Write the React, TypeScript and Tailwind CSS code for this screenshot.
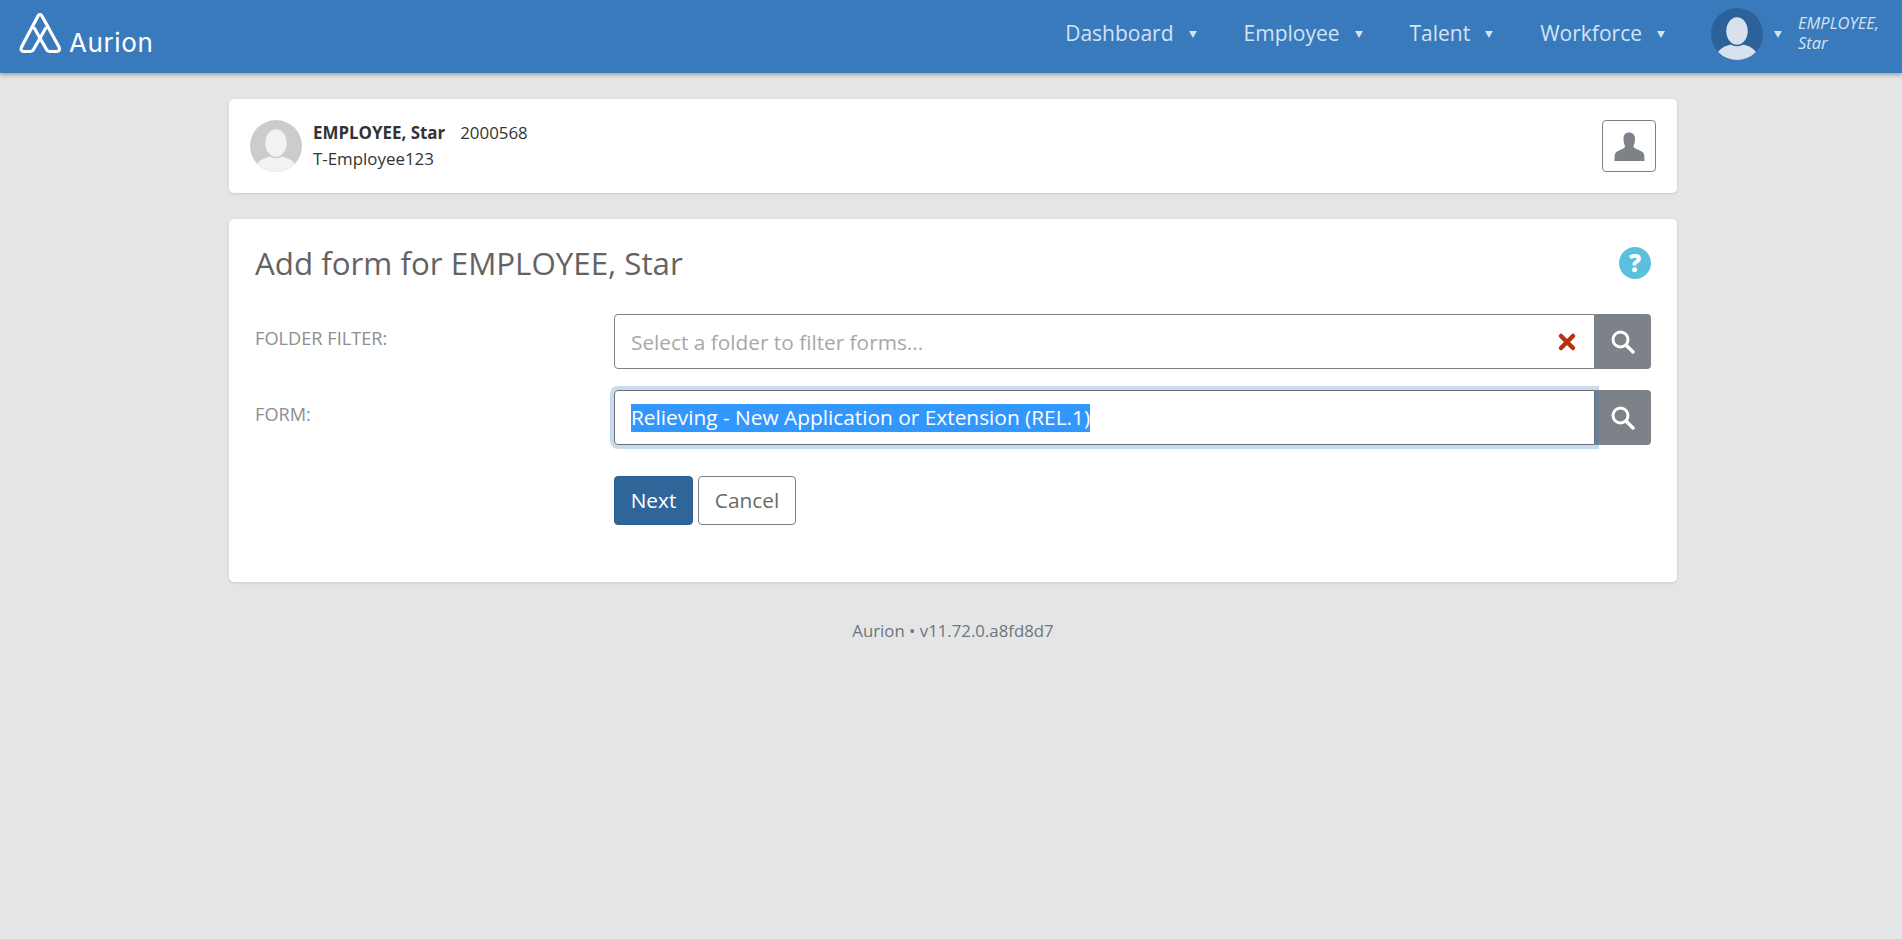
import { X } from "lucide-react";

const font = { fontFamily: '"Open Sans", sans-serif' };

const Logo = () => (
  <div className="flex items-end">
    <svg width="44" height="44" viewBox="0 0 44 44" fill="none" stroke="white" strokeWidth="3.2" strokeLinejoin="round" strokeLinecap="round">
      <path d="M21 2.5 Q22 2.5 23 4 L40 35 Q41.5 39 38 39.5 L30.5 39.5 Q28.5 39.5 27.5 37.5 L15.5 16.5" />
      <path d="M21 2.5 Q20 2.5 19 4 L2.5 35 Q1 39 4.5 39.5 L11.5 39.5 Q13.5 39.5 14.5 37.5 L26.5 16.5" />
    </svg>
    <span className="ml-[6px] -mb-[2px] text-[26px] leading-[30px] font-normal tracking-[0.6px] text-white" style={{ fontFamily: "Inter, sans-serif" }}>
      Aurion
    </span>
  </div>
);

const Caret = () => (
  <svg width="8" height="7" viewBox="0 0 8 7" fill="#d3e3f3">
    <path d="M0 0 H8 L4 7 Z" />
  </svg>
);

const NavItem = ({ label, gap }: { label: string; gap: string }) => (
  <button className={`flex items-center gap-[15px] text-[21px] text-[#d3e3f3] ${gap}`}>
    {label}
    <Caret />
  </button>
);

const Person = ({ bg, fg, id }: { bg: string; fg: string; id: string }) => (
  <svg width="52" height="52" viewBox="0 0 52 52">
    <defs>
      <clipPath id={id}>
        <circle cx="26" cy="26" r="26" />
      </clipPath>
    </defs>
    <g clipPath={`url(#${id})`}>
      <rect width="52" height="52" fill={bg} />
      <ellipse cx="26" cy="50" rx="21" ry="14" fill={fg} />
      <ellipse cx="26" cy="23" rx="11.5" ry="14.5" fill={fg} stroke={bg} strokeWidth="1.5" />
    </g>
  </svg>
);

const SearchBtn = () => (
  <button className="flex h-[55px] w-[56px] items-center justify-center rounded-r-[4px] bg-[#7c8287]">
    <svg width="24" height="24" viewBox="0 0 24 24" fill="none" stroke="white" strokeLinecap="round">
      <circle cx="9.5" cy="9.5" r="7.5" strokeWidth="3" />
      <path d="M15.5 15.5 L22 22" strokeWidth="3.4" />
    </svg>
  </button>
);

export default function App() {
  return (
    <div className="min-h-[939px] bg-[#e4e5e7]" style={font}>
      <header className="flex h-[73px] items-center justify-between bg-[#397abd] pb-[5px] pl-[19px] pr-[14px] shadow-[0_2px_4px_rgba(0,0,0,0.3)]">
        <Logo />
        <div className="flex items-center">
          <NavItem label="Dashboard" gap="mr-[47px]" />
          <NavItem label="Employee" gap="mr-[47px]" />
          <NavItem label="Talent" gap="mr-[47px]" />
          <NavItem label="Workforce" gap="mr-[46px]" />
          <Person bg="#2c619a" fg="#d8e2ee" id="nav-avatar" />
          <span className="ml-[11px]">
            <Caret />
          </span>
          <div className="ml-[16px] -mt-[3px] w-[90px] text-[16.5px] leading-[20px] italic text-[#d3e3f3]">
            EMPLOYEE,
            <br />
            Star
          </div>
        </div>
      </header>

      <main className="ml-[229px] w-[1448px]">
        <section className="mt-[26px] flex h-[94px] items-center justify-between rounded-[5px] bg-white pl-[21px] pr-[21px] shadow-[0_1px_3px_rgba(0,0,0,0.12)]">
          <div className="flex items-center">
            <Person bg="#cccccc" fg="#f2f2f2" id="card-avatar" />
            <div className="ml-[11px] text-[16.9px] leading-[26px] text-[#333333]">
              <div>
                <span className="font-bold">EMPLOYEE, Star</span>
                <span className="ml-[15px]">2000568</span>
              </div>
              <div>T-Employee123</div>
            </div>
          </div>
          <button className="flex h-[52px] w-[54px] items-center justify-center rounded-[4px] border border-[#7c8287] bg-white">
            <svg width="31" height="29" viewBox="0 0 31 29" fill="#7c8287">
              <path d="M15 .5C19 .5 21 3 21 7C21 11 19.5 13 19.5 15C21 17 26 18 28.5 20C30 21 30.5 23 30.5 29L.5 29C.5 23 1 21 2.5 20C5 18 10 17 11 15C11 13 9.5 11 9.5 7C9.5 3 11 .5 15 .5Z" />
            </svg>
          </button>
        </section>

        <section className="mt-[26px] h-[363px] rounded-[5px] bg-white px-[26px] pt-[24px] shadow-[0_1px_3px_rgba(0,0,0,0.12)]">
          <div className="flex items-center justify-between">
            <h1 className="-mt-[1px] mb-[1px] text-[31.3px] leading-[42px] text-[#636363]">Add form for EMPLOYEE, Star</h1>
            <span className="-mt-[3px] flex h-[32px] w-[32px] items-center justify-center rounded-full bg-[#5bc0de] text-[24px] leading-none font-extrabold text-white">?</span>
          </div>

          <div className="mt-[29px] grid grid-cols-[359px_1fr] gap-y-[21px]">
            <label className="pt-[12px] text-[18.2px] leading-[24px] text-[#8e8e8e]">FOLDER FILTER:</label>
            <div className="flex">
              <div className="flex h-[55px] flex-1 items-center justify-between rounded-l-[4px] border border-[#7c8287] pl-[16px] pr-[15px] text-[20.8px] text-[#a8a8a8]">
                <span className="mt-[2px]">Select a folder to filter forms...</span>
                <X size={24} color="#b8310f" strokeWidth={4.5} />
              </div>
              <SearchBtn />
            </div>

            <label className="pt-[12px] text-[18.2px] leading-[24px] text-[#8e8e8e]">FORM:</label>
            <div className="flex">
              <div className="z-10 flex h-[55px] flex-1 items-center rounded-l-[4px] border border-[#66707c] pl-[16px] text-[20.85px] text-white shadow-[0_0_0_4px_rgba(57,122,189,0.27)]">
                <span className="h-[28px] bg-[#3297fd] leading-[26px]">Relieving - New Application or Extension (REL.1)</span>
              </div>
              <SearchBtn />
            </div>
          </div>

          <div className="mt-[31px] ml-[359px] flex gap-[5px] text-[20.8px]">
            <button className="h-[49px] w-[79px] rounded-[4px] border border-[#2a5f95] bg-[#2f6699] text-white">Next</button>
            <button className="h-[49px] w-[98px] rounded-[4px] border border-[#7c8287] bg-white text-[#6b6b6b]">Cancel</button>
          </div>
        </section>

        <footer className="mt-[37px] text-center text-[16.8px] leading-[24px] text-[#6f757a]">Aurion • v11.72.0.a8fd8d7</footer>
      </main>
    </div>
  );
}
